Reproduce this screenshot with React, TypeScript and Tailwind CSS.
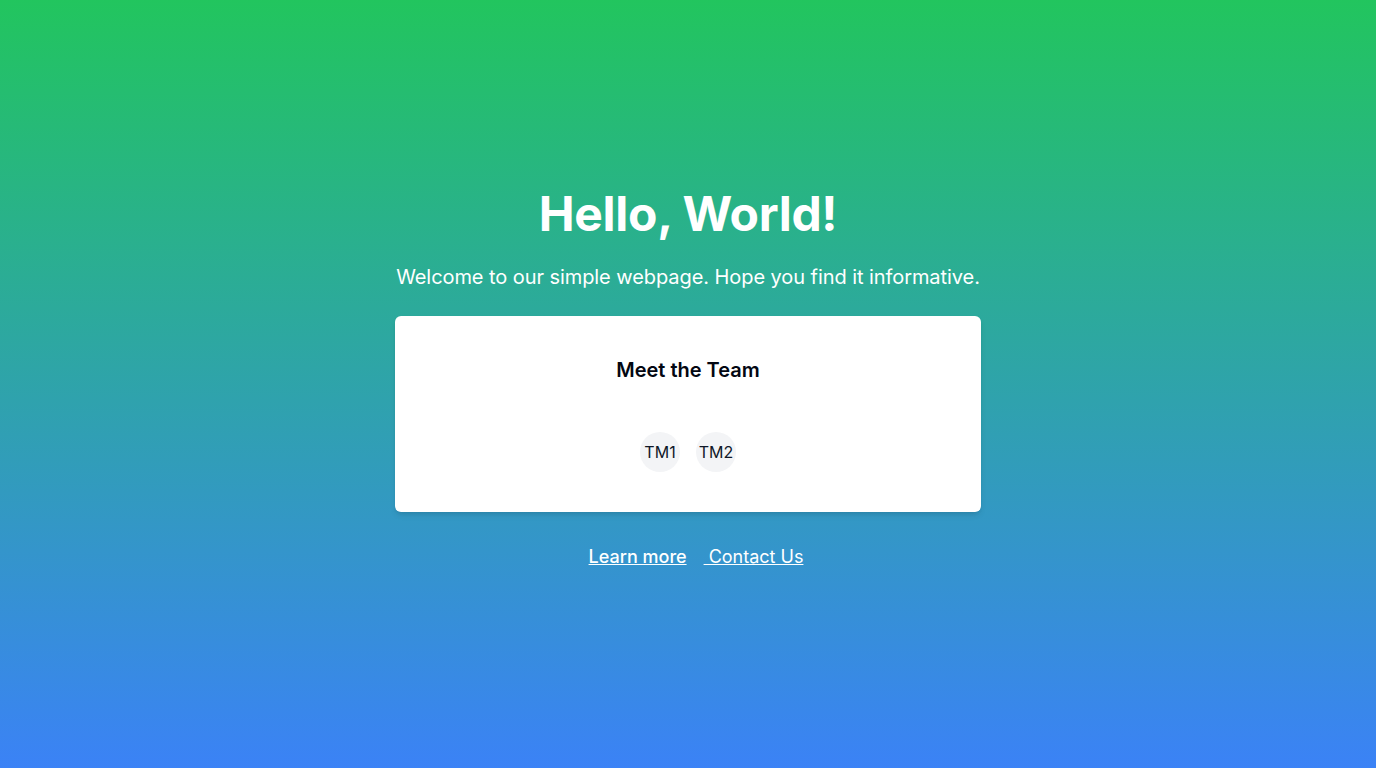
import React from "react";

export default function App() {
  return (
    <div
      className="min-h-screen w-full flex flex-col items-center justify-center pb-[8px] bg-[linear-gradient(to_bottom,#22c55e,#3b82f6)] text-white"
      style={{ fontFamily: "Inter, 'Noto Sans', sans-serif" }}
    >
      <h1 className="text-5xl leading-[48px] font-bold mb-[25px] tracking-[-0.3px]">Hello, World!</h1>
      <p className="text-xl leading-7 mb-[25px] tracking-[-0.07px]">
        Welcome to our simple webpage. Hope you find it informative.
      </p>
      <div className="w-[586px] bg-white rounded-md shadow-md p-10 flex flex-col items-center">
        <h2 className="text-xl leading-7 font-semibold text-gray-950 mb-12">Meet the Team</h2>
        <div className="flex gap-4">
          <div className="w-10 h-10 rounded-full bg-gray-100 flex items-center justify-center text-base text-gray-900">
            TM1
          </div>
          <div className="w-10 h-10 rounded-full bg-gray-100 flex items-center justify-center text-base text-gray-900">
            TM2
          </div>
        </div>
      </div>
      <div className="mt-[31px] flex items-center text-lg leading-7">
        <a href="#" className="underline font-medium ml-4">Learn more</a>
        <a href="#" className="underline ml-[17px] whitespace-pre">{" Contact Us"}</a>
      </div>
    </div>
  );
}
